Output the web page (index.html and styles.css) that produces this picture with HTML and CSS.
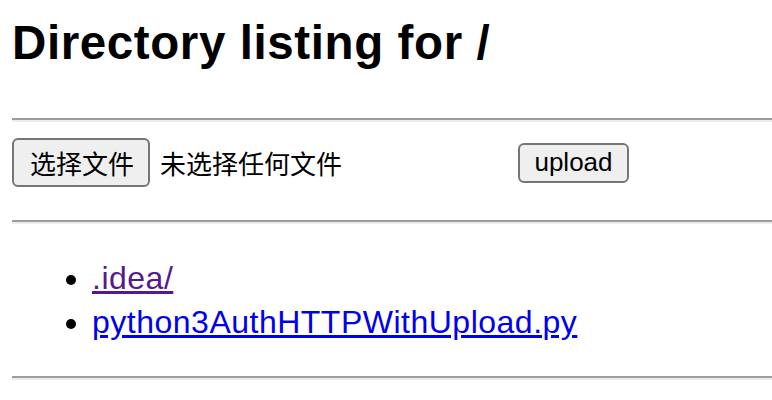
FILE: index.html
```html
<!DOCTYPE html>
<html lang="zh-CN">
<head>
<meta charset="utf-8">
<title>Directory listing for /</title>
<link rel="stylesheet" href="styles.css">
</head>
<body>
<h2 class="title">Directory listing for /</h2>
<hr class="rule">
<form class="upload-form">
  <div class="file-input">
    <span class="btn btn-choose">选择文件</span>
    <span class="file-status">未选择任何文件</span>
  </div>
  <span class="btn btn-upload">upload</span>
</form>
<hr class="rule rule-after-form">
<ul class="listing">
  <li><a class="link visited" href="#">.idea/</a></li>
  <li><a class="link" href="#">python3AuthHTTPWithUpload.py</a></li>
</ul>
<hr class="rule">
</body>
</html>
```

FILE: styles.css
```css
html, body {
  background: #ffffff;
}
body {
  margin: 0 0 0 12px;
  font-family: "Liberation Sans", Arial, "Noto Sans CJK SC", sans-serif;
  color: #000;
}
.title {
  margin: 10px 0 42px;
  font-size: 47.5px;
  line-height: 66px;
  font-weight: bold;
  letter-spacing: 0.6px;
}
.rule {
  margin: 0;
  height: 0;
  border: 0;
  border-top: 2px solid #9c9c9c;
  border-bottom: 2px solid #ececec;
}
.upload-form {
  display: flex;
  align-items: center;
  margin: 16px 0 33px;
  height: 49px;
}
.file-input {
  display: flex;
  align-items: center;
  width: 506px;
}
.btn {
  display: inline-flex;
  align-items: center;
  justify-content: center;
  box-sizing: border-box;
  background: #efefef;
  border: 2px solid #767676;
  border-radius: 6px;
  color: #000;
}
.btn-choose {
  width: 138px;
  height: 49px;
  font-family: "Noto Sans CJK SC", sans-serif;
  font-size: 26px;
  padding-left: 2px;
}
.file-status {
  margin-left: 10px;
  font-family: "Noto Sans CJK SC", sans-serif;
  font-size: 26px;
}
.btn-upload {
  width: 111px;
  height: 40px;
  font-family: "Liberation Sans", Arial, sans-serif;
  font-size: 26px;
}
.listing {
  margin: 32px 0;
  padding-left: 80px;
  font-size: 32px;
  line-height: 44px;
  letter-spacing: 0.5px;
}
.link {
  color: #0000ee;
}
.link.visited {
  color: #551a8b;
}
```
